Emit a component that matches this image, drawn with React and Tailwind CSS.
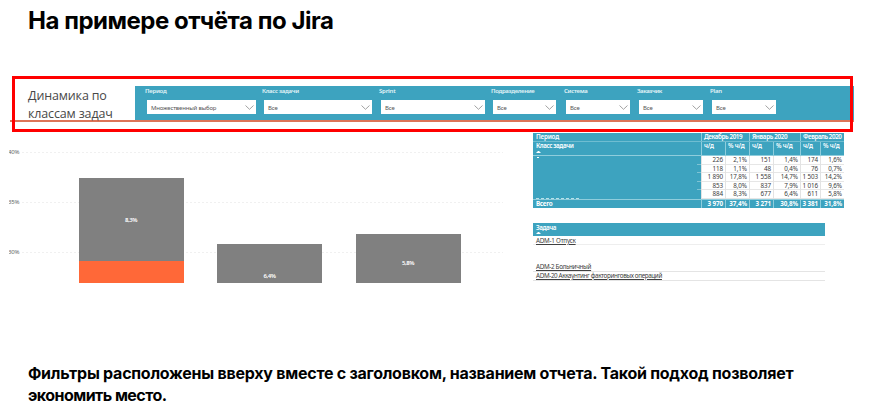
import React from 'react';

const filters = [
  { label: 'Период', value: 'Множественный выбор', cell: 'w-[117px]', box: 'w-[109px]', ls: 'tracking-[-0.25px]' },
  { label: 'Класс задачи', value: 'Все', cell: 'w-[117px]', box: 'w-[108px]', ls: 'tracking-[-0.28px]' },
  { label: 'Sprint', value: 'Все', cell: 'w-[112px]', box: 'w-[104px]', ls: 'tracking-[-0.2px]' },
  { label: 'Подразделение', value: 'Все', cell: 'w-[73px]', box: 'w-[63px]', ls: 'tracking-[-0.32px]' },
  { label: 'Система', value: 'Все', cell: 'w-[73px]', box: 'w-[64px]', ls: 'tracking-[-0.3px]' },
  { label: 'Заказчик', value: 'Все', cell: 'w-[73px]', box: 'w-[64px]', ls: 'tracking-[-0.4px]' },
  { label: 'Plan', value: 'Все', cell: 'w-[73px]', box: 'w-[64px]', ls: 'tracking-[-0.2px]' },
];

const rows = [
  ['226', '2,1%', '151', '1,4%', '174', '1,6%'],
  ['118', '1,1%', '48', '0,4%', '76', '0,7%'],
  ['1 890', '17,8%', '1 558', '14,7%', '1 503', '14,2%'],
  ['853', '8,0%', '837', '7,9%', '1 016', '9,6%'],
  ['884', '8,3%', '677', '6,4%', '611', '5,8%'],
];

const total = ['3 970', '37,4%', '3 271', '30,8%', '3 381', '31,8%'];

const columns = 'grid grid-cols-[168px_24px_24px_24px_27px_20px_24px]';

function Filter({ label, value, cell, box, ls }) {
  return (
    <div className={`${cell} shrink-0`}>
      <div className={`h-[14px] pt-[1px] text-[6px] leading-[9px] font-semibold text-[#e4f4f8] ${ls}`}>{label}</div>
      <div className={`${box} ml-[2px] flex h-[14px] items-center justify-between bg-white pr-[2px] pl-[4px]`}>
        <span className="pt-[1px] text-[6px] leading-[10px] tracking-[-0.18px] text-[#555]">{value}</span>
        <svg className="h-[5px] w-[9px]" viewBox="0 0 9 5" fill="none" stroke="#8a8a8a" strokeWidth="0.8">
          <path d="M0.5 0.5 4.5 4.3 8.5 0.5" />
        </svg>
      </div>
    </div>
  );
}

function GridLine({ label }) {
  return (
    <div className="flex h-[50px] items-center overflow-hidden">
      <span className="-ml-[1px] w-[14px] text-[6px] leading-[8px] tracking-[-0.2px] text-[#666]">{label}</span>
      <span className="h-px flex-1 bg-[repeating-linear-gradient(90deg,#f0f0f0_0_2px,transparent_2px_4px)]" />
    </div>
  );
}

function Chart() {
  return (
    <div className="relative h-[156px] w-[524px] shrink-0 overflow-hidden pl-[9px]">
      <div className="w-[494px]">
        <GridLine label="40%" />
        <GridLine label="35%" />
        <GridLine label="30%" />
      </div>
      <div className="absolute inset-0 flex items-end gap-[33.5px] pl-[78.5px] text-center text-[6px] leading-[8px] font-semibold tracking-[-0.4px] text-white">
        <div className="flex h-[105px] w-[105px] flex-col bg-[#808080]">
          <div className="flex-1 pt-[38px]">8,3%</div>
          <div className="h-[22px] bg-[#ff6838]" />
        </div>
        <div className="h-[39px] w-[105px] bg-[#808080] pt-[28px]">6,4%</div>
        <div className="h-[49px] w-[105px] bg-[#808080] pt-[25px]">5,8%</div>
      </div>
    </div>
  );
}

function SortMark() {
  return (
    <svg className="h-[2px] w-[5px] shrink-0" viewBox="0 0 5 2">
      <path d="M0 2 2 0 3 0 5 2Z" fill="white" />
    </svg>
  );
}

function PeriodTable() {
  return (
    <div className="w-[311px] text-[6.3px] leading-[8px]">
      <div className="grid h-[9px] grid-cols-[168px_48px_51px_44px] border-b border-[#6fbdd1] bg-[#3da3bf] font-semibold text-white">
        <div className="pl-[3px] tracking-[-0.2px]">Период</div>
        <div className="overflow-hidden border-l border-[#8fcddc] pl-[2px] whitespace-nowrap tracking-[-0.4px]">Декабрь 2019</div>
        <div className="overflow-hidden border-l border-[#8fcddc] pl-[2px] whitespace-nowrap tracking-[-0.35px]">Январь 2020</div>
        <div className="overflow-hidden border-l border-[#8fcddc] pl-[2px] whitespace-nowrap tracking-[-0.45px]">Февраль 2020</div>
      </div>
      <div className={`${columns} h-[14px] border-b border-[#8fcddc] bg-[#3da3bf] font-semibold text-white`}>
        <div className="flex flex-col pl-[3px]">
          <span className="h-[9px] tracking-[-0.4px]">Класс задачи</span>
          <SortMark />
        </div>
        {['ч/д', '% ч/д', 'ч/д', '% ч/д', 'ч/д', '% ч/д'].map((name, i) => (
          <div key={i} className="border-l border-[#8fcddc] pl-[2px] whitespace-nowrap tracking-[-0.2px]">{name}</div>
        ))}
      </div>
      <div className="flex h-[43px]">
        <div className="flex w-[168px] justify-between bg-[#3da3bf] pl-[3px]">
          <div className="flex flex-col justify-between">
            <span className="mt-[1px] ml-[1px] h-px w-[2px] bg-white" />
            <span className="h-px w-[45px] bg-[repeating-linear-gradient(90deg,#b9e0e9_0_3px,transparent_3px_5px)]" />
          </div>
          <div className="w-[4px]">
            {rows.slice(1).map((row, r) => (
              <div key={r} className="h-[8.6px] border-b border-[#7fc3d4]" />
            ))}
          </div>
        </div>
        <div className="flex-1">
          {rows.map((row, r) => (
            <div key={r} className="grid h-[8.6px] grid-cols-[24px_24px_24px_27px_20px_24px] border-b border-[#e6e6e6] text-right text-[#404040]">
              {row.map((cell, c) => (
                <div key={c} className="border-l border-[#e3e3e3] pr-[2px] leading-[8.6px] whitespace-nowrap tracking-[-0.1px]">{cell}</div>
              ))}
            </div>
          ))}
        </div>
      </div>
      <div className={`${columns} h-[9px] border-t border-[#8fcddc] bg-[#3da3bf] text-right font-bold text-white`}>
        <div className="pl-[3px] text-left tracking-[-0.3px]">Всего</div>
        {total.map((cell, c) => (
          <div key={c} className="border-l border-[#8fcddc] pr-[2px] whitespace-nowrap tracking-[-0.1px]">{cell}</div>
        ))}
      </div>
    </div>
  );
}

function TaskList() {
  return (
    <div className="mt-[15px] w-[292px] text-[6.3px] leading-[8px] text-[#404040]">
      <div className="flex h-[13px] flex-col bg-[#3da3bf] pl-[3px] font-semibold text-white">
        <span className="h-[9px] pt-px tracking-[-0.4px]">Задача</span>
        <SortMark />
      </div>
      <div className="h-[9px] border-b border-[#eee] pt-px pl-[3px] tracking-[-0.25px] underline">ADM-1 Отпуск</div>
      <div className="mt-[18px] h-[9px] border-b border-[#e4e4e4] pl-[3px] tracking-[-0.33px] underline">ADM-2 Больничный</div>
      <div className="h-[9px] border-b border-[#e4e4e4] pl-[3px] tracking-[-0.37px] underline">ADM-20 Аккаунтинг факторинговых операций</div>
    </div>
  );
}

export default function App() {
  return (
    <main className="h-[414px] w-[870px] overflow-hidden bg-white font-['Noto_Sans','Open_Sans',sans-serif]">
      <h1 className="h-[86px] pt-[5px] pl-[28px] font-['Inter','Noto_Sans',sans-serif] text-[24px] leading-[32px] font-bold tracking-[-0.47px] whitespace-nowrap text-black">
        На примере отчёта по Jira
      </h1>

      <section className="relative">
        <header className="ml-[10px] flex h-[36px] w-[844px] border-b-2 border-[#dd7458]">
          <h2 className="w-[125px] shrink-0 pt-px pl-[18px] font-['Open_Sans','Noto_Sans',sans-serif] text-[12.5px] leading-[17.5px] tracking-[-0.15px] whitespace-nowrap text-[#484848]">
            Динамика по
            <br />
            классам задач
          </h2>
          <div className="flex flex-1 bg-[#3da3bf] pl-[10px]">
            {filters.map((filter) => (
              <Filter key={filter.label} {...filter} />
            ))}
          </div>
        </header>
        <div className="pointer-events-none absolute top-[-10px] left-[12px] h-[56px] w-[841px] border-3 border-[#ff0000]" />
      </section>

      <section className="flex h-[161px]">
        <div className="mt-[5px]">
          <Chart />
        </div>
        <div className="pt-[11px] pl-[9px]">
          <PeriodTable />
          <TaskList />
        </div>
      </section>

      <p className="mt-[79px] pl-[28px] font-['Inter','Noto_Sans',sans-serif] text-[16px] leading-[22px] font-bold tracking-[-0.25px] whitespace-nowrap text-black">
        Фильтры расположены вверху вместе с заголовком, названием отчета. Такой подход позволяет
        <br />
        <span className="tracking-[-0.55px]">экономить место.</span>
      </p>
    </main>
  );
}
